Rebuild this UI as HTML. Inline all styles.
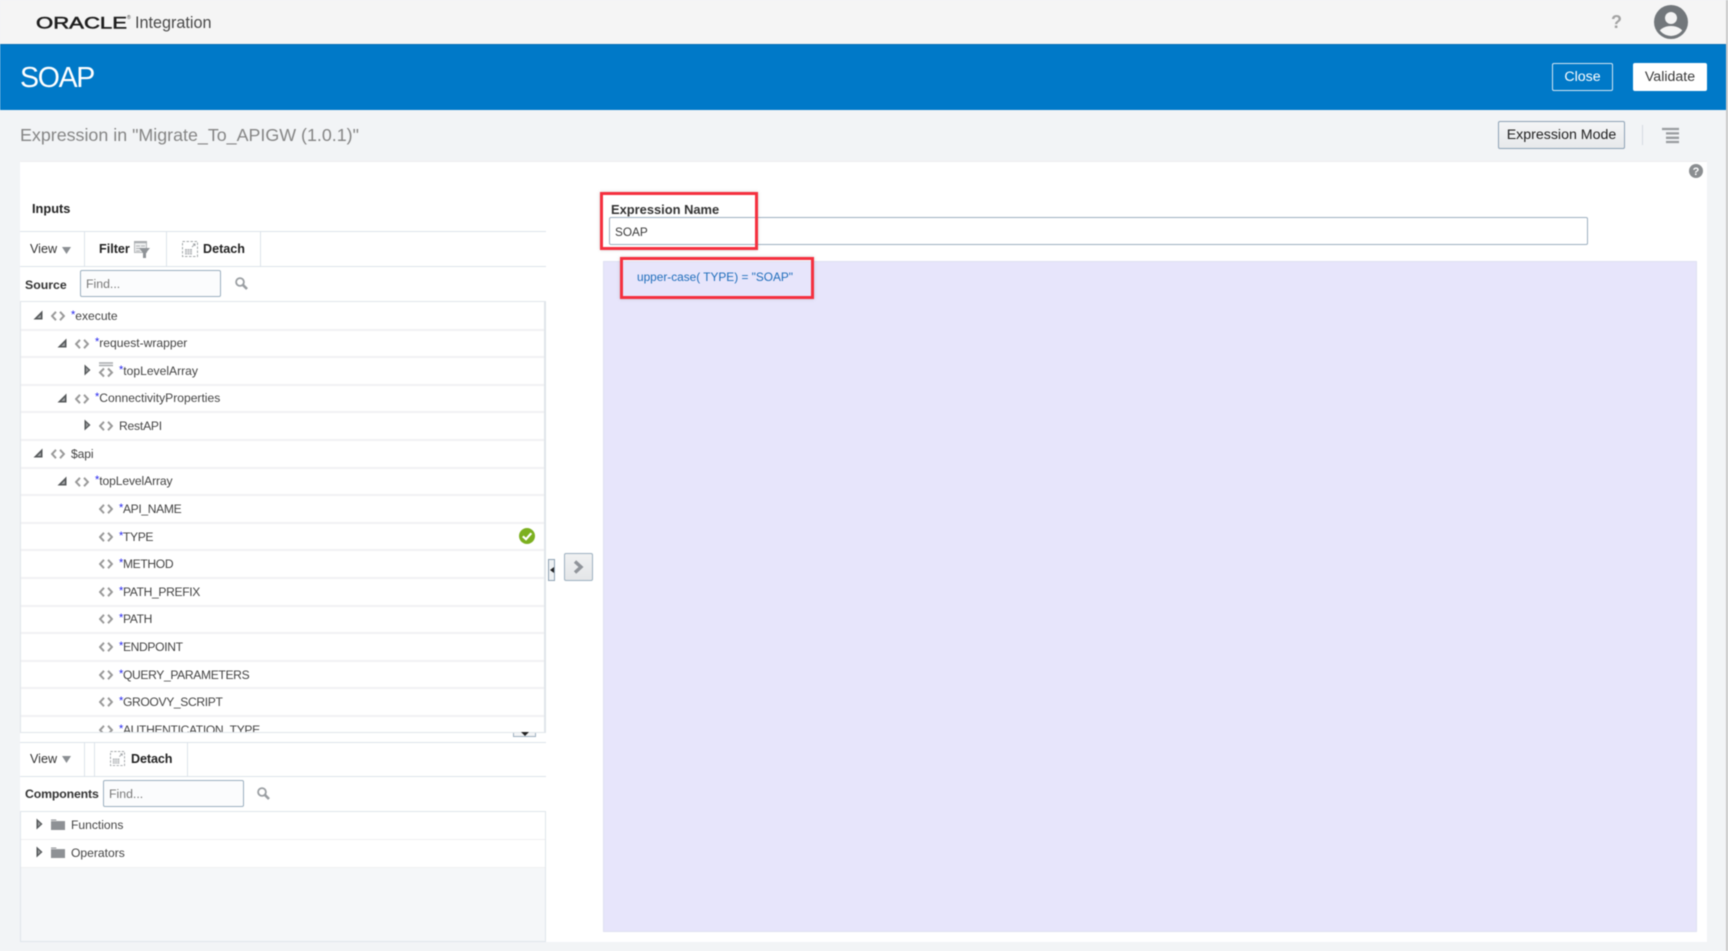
<!DOCTYPE html>
<html><head><meta charset="utf-8"><title>SOAP</title>
<style>
html,body{margin:0;padding:0;width:1728px;height:951px;overflow:hidden;background:#f2f4f6}
body{font-family:"Liberation Sans",Arial,sans-serif;color:#3f3f3f;position:relative}
#r{position:absolute;left:0;top:0;width:1728px;height:951px;filter:blur(.4px)}
.a,.t,.l,.b{position:absolute}
.t{white-space:nowrap;font-size:12.1px;line-height:16px;color:#444}
.t i{font-style:normal;color:#1a1aee;font-size:11px;position:relative;top:-2px}
.u{letter-spacing:-.35px}
.b{font-weight:bold;color:#222;font-size:12.6px;line-height:16px;white-space:nowrap}
.l{background:#dde4eb}
.rl{position:absolute;left:0;width:524px;height:2px;background:#f1f2f3}
.inp{position:absolute;box-sizing:border-box;border:1px solid #9db0c0;border-radius:2px;background:#fbfcfd;font-size:12.3px;color:#777;padding:0 0 0 5px;line-height:27px}
.btn{position:absolute;box-sizing:border-box;text-align:center;border-radius:2px;font-size:14.2px}
svg{position:absolute;overflow:visible}
.red{position:absolute;box-sizing:border-box;border:3px solid #f5303f;box-shadow:0 0 3px rgba(120,120,120,.35)}
</style></head><body>
<div id="r">
<svg width="0" height="0" style="position:absolute">
<defs>
<symbol id="c" viewBox="0 0 14 10"><path d="M5 .8 1 5l4 4.2M9 .8 13 5 9 9.200" fill="none" stroke="#9a9a9a" stroke-width="2"/></symbol>
<symbol id="ex" viewBox="0 0 10 10"><path d="M9.500.5V9.500H.5Z" fill="#55585a"/><path d="M7.800 4.500V8H4.300Z" fill="#a8aaac"/></symbol>
<symbol id="co" viewBox="0 0 7 12"><path d="M.5.500 6.500 6 .5 11.500Z" fill="#55585a"/><path d="M2 3.500 4.700 6 2 8.500Z" fill="#9a9c9e"/></symbol>
<symbol id="s" viewBox="0 0 13 13"><circle cx="5" cy="5" r="3.900" fill="none" stroke="#9a9ea2" stroke-width="1.800"/><path d="M7.800 7.800 12 12" stroke="#9a9ea2" stroke-width="2.600"/></symbol>
<symbol id="d" viewBox="0 0 16 16"><rect x=".5" y=".5" width="15" height="15" fill="none" stroke="#a3a7aa" stroke-dasharray="2.500 1.500"/><path d="M3 8h7v5.500H3z" fill="#b3b6b9"/><path d="M3 10h7M3 11.800h7M5.300 8v5.500M7.600 8v5.500" stroke="#fff" stroke-width=".5"/><path d="M10 6l3-3M11 3h2v2" fill="none" stroke="#a3a7aa"/></symbol>
<symbol id="f" viewBox="0 0 14 12"><path d="M0 1.500h5L6 3h8v9H0Z" fill="#8e9195"/><path d="M0 2.800h14" stroke="#fff" stroke-width=".6"/></symbol>
</defs></svg>

<!-- top bar -->
<div class="a" style="left:0;top:0;width:1728px;height:44px;background:#f5f5f5"></div>
<svg style="left:36px;top:14px" width="96" height="18"><text x="0" y="14.300" font-family="'Liberation Sans',sans-serif" font-size="17" font-weight="normal" fill="#1e1e1e" stroke="#1e1e1e" stroke-width=".55" textLength="91" lengthAdjust="spacingAndGlyphs">ORACLE</text></svg>
<div class="t" style="left:127px;top:15px;font-size:5px;line-height:6px;color:#333">®</div>
<div class="t" style="left:135px;top:13px;font-size:16.200px;line-height:20px;color:#4a4a4a">Integration</div>
<div class="t" style="left:1611px;top:11px;font-size:18px;line-height:22px;font-weight:bold;color:#a3a3a3">?</div>
<svg style="left:1653px;top:4px" width="36" height="36" viewBox="0 0 36 36"><defs><clipPath id="av"><circle cx="18" cy="18" r="14"/></clipPath></defs><circle cx="18" cy="18" r="17" fill="#72777b"/><g clip-path="url(#av)"><ellipse cx="18" cy="31" rx="13" ry="9" fill="#f4f4f4"/></g><circle cx="18" cy="14" r="6" fill="#f4f4f4"/></svg>

<!-- blue bar -->
<div class="a" style="left:0;top:44px;width:1728px;height:66px;background:#0079c8;border-top:1px solid #066fb5;box-sizing:border-box"></div>
<div class="t" style="left:20px;top:59px;font-size:28.500px;line-height:38px;color:#fff;letter-spacing:-1.300px">SOAP</div>
<div class="btn" style="left:1552px;top:63px;width:61px;height:28px;border:1px solid #d5e6f3;color:#fff;line-height:27px">Close</div>
<div class="btn" style="left:1633px;top:63px;width:74px;height:28px;background:#fff;color:#3a3a3a;line-height:29px">Validate</div>

<!-- sub header -->
<div class="t" style="left:20px;top:123px;font-size:17.850px;line-height:24px;color:#858585">Expression in "Migrate_To_APIGW (1.0.1)"</div>
<div class="btn" style="left:1498px;top:121px;width:127px;height:28px;border:1px solid #8da2b5;background:linear-gradient(#f4f5f6,#e7e9eb);color:#222;line-height:27px">Expression Mode</div>
<div class="a" style="left:1642px;top:125px;width:1px;height:20px;background:#d5dce2"></div>
<svg style="left:1662px;top:128px" width="18" height="16"><path d="M0 1h17M4 5.400h13M4 9.800h13M4 14h13" stroke="#999c9f" stroke-width="2.300"/></svg>

<!-- white panel -->
<div class="a" style="left:20px;top:161px;width:1687px;height:781px;background:#fff;border-top:1px solid #edeeef;box-sizing:border-box"></div>
<svg style="left:1689px;top:164px" width="14" height="14" viewBox="0 0 14 14"><circle cx="7" cy="7" r="7" fill="#8b8e91"/><text x="7" y="11" text-anchor="middle" font-family="'Liberation Sans',sans-serif" font-weight="bold" font-size="11" fill="#fff">?</text></svg>

<div class="b" style="left:32px;top:201px;font-size:12.800px">Inputs</div>

<!-- toolbar 1 -->
<div class="l" style="left:20px;top:231px;width:526px;height:1px"></div>
<div class="l" style="left:20px;top:266px;width:526px;height:1px"></div>
<div class="l" style="left:84px;top:231px;width:1px;height:35px"></div>
<div class="l" style="left:166px;top:231px;width:1px;height:35px"></div>
<div class="l" style="left:260px;top:231px;width:1px;height:35px"></div>
<div class="t" style="left:30px;top:241px;font-size:12.600px;color:#333">View</div>
<svg style="left:62px;top:247px" width="9" height="7"><path d="M0 0h9L4.500 7Z" fill="#8b8f93"/></svg>
<div class="b" style="left:99px;top:241px">Filter</div>
<svg style="left:134px;top:241px" width="16" height="17" viewBox="0 0 16 17"><path d="M.5.500h12v11h-12z" fill="#eeeff0" stroke="#b4b7ba"/><path d="M0 1.200h13" stroke="#a8abae" stroke-width="2"/><path d="M2 5h4M2 7.500h4M2 10h4M7 5h4" stroke="#b0b3b6"/><path d="M5 7h11l-4 5v5h-3v-5Z" fill="#8f9397"/></svg>
<svg style="left:182px;top:241px" width="16" height="16"><use href="#d"/></svg>
<div class="b" style="left:203px;top:241px">Detach</div>
<div class="b" style="left:25px;top:276.500px;color:#333;font-size:12.300px">Source</div>
<div class="inp" style="left:80px;top:270px;width:141px;height:27px">Find...</div>
<svg style="left:235px;top:277px" width="13" height="13"><use href="#s"/></svg>

<!-- tree 1 -->
<div class="a" style="left:20px;top:301px;width:526px;height:432px;box-sizing:border-box;border:1px solid #e0e5ea;border-right-width:2px;overflow:hidden;background:#fff">
<div class="rl" style="top:26.600px"></div><div class="rl" style="top:54.200px"></div><div class="rl" style="top:81.800px"></div><div class="rl" style="top:109.400px"></div><div class="rl" style="top:137px"></div><div class="rl" style="top:164.600px"></div><div class="rl" style="top:192.200px"></div><div class="rl" style="top:219.800px"></div><div class="rl" style="top:247.400px"></div><div class="rl" style="top:275px"></div><div class="rl" style="top:302.600px"></div><div class="rl" style="top:330.200px"></div><div class="rl" style="top:357.800px"></div><div class="rl" style="top:385.400px"></div><div class="rl" style="top:413px"></div>

<svg style="left:12px;top:8px" width="10" height="10"><use href="#ex"/></svg><svg style="left:30px;top:9px" width="14" height="10"><use href="#c"/></svg><div class="t" style="left:50px;top:5.500px"><i>*</i>execute</div>
<svg style="left:36px;top:36px" width="10" height="10"><use href="#ex"/></svg><svg style="left:54px;top:37px" width="14" height="10"><use href="#c"/></svg><div class="t" style="left:74px;top:33px"><i>*</i>request-wrapper</div>
<svg style="left:63px;top:62px" width="7" height="12"><use href="#co"/></svg><svg style="left:78px;top:60px" width="14" height="16" viewBox="0 0 14 16"><path d="M0 1h14M0 3.500h14" stroke="#a8abae" stroke-width="1.400"/><path d="M5 6.500 1 10.500l4 4M9 6.500l4 4-4 4" fill="none" stroke="#9a9a9a" stroke-width="2"/></svg><div class="t" style="left:98px;top:60.500px"><i>*</i>topLevelArray</div>
<svg style="left:36px;top:91px" width="10" height="10"><use href="#ex"/></svg><svg style="left:54px;top:92px" width="14" height="10"><use href="#c"/></svg><div class="t" style="left:74px;top:88px"><i>*</i>ConnectivityProperties</div>
<svg style="left:63px;top:117px" width="7" height="12"><use href="#co"/></svg><svg style="left:78px;top:119px" width="14" height="10"><use href="#c"/></svg><div class="t" style="left:98px;top:115.500px;letter-spacing:-.2px">RestAPI</div>
<svg style="left:12px;top:146px" width="10" height="10"><use href="#ex"/></svg><svg style="left:30px;top:147px" width="14" height="10"><use href="#c"/></svg><div class="t" style="left:50px;top:143.500px;letter-spacing:-.1px">$api</div>
<svg style="left:36px;top:174px" width="10" height="10"><use href="#ex"/></svg><svg style="left:54px;top:175px" width="14" height="10"><use href="#c"/></svg><div class="t" style="left:74px;top:171px;letter-spacing:-.1px"><i>*</i>topLevelArray</div>
<svg style="left:78px;top:202px" width="14" height="10"><use href="#c"/></svg><div class="t u" style="left:98px;top:199px"><i>*</i>API_NAME</div>
<svg style="left:78px;top:230px" width="14" height="10"><use href="#c"/></svg><div class="t u" style="left:98px;top:226.500px"><i>*</i>TYPE</div>
<svg style="left:78px;top:257px" width="14" height="10"><use href="#c"/></svg><div class="t u" style="left:98px;top:254px"><i>*</i>METHOD</div>
<svg style="left:78px;top:285px" width="14" height="10"><use href="#c"/></svg><div class="t u" style="left:98px;top:281.500px"><i>*</i>PATH_PREFIX</div>
<svg style="left:78px;top:312px" width="14" height="10"><use href="#c"/></svg><div class="t u" style="left:98px;top:309px"><i>*</i>PATH</div>
<svg style="left:78px;top:340px" width="14" height="10"><use href="#c"/></svg><div class="t u" style="left:98px;top:336.500px"><i>*</i>ENDPOINT</div>
<svg style="left:78px;top:368px" width="14" height="10"><use href="#c"/></svg><div class="t u" style="left:98px;top:364.500px"><i>*</i>QUERY_PARAMETERS</div>
<svg style="left:78px;top:395px" width="14" height="10"><use href="#c"/></svg><div class="t u" style="left:98px;top:392px"><i>*</i>GROOVY_SCRIPT</div>
<svg style="left:78px;top:423px" width="14" height="10"><use href="#c"/></svg><div class="t u" style="left:98px;top:419.500px"><i>*</i>AUTHENTICATION_TYPE</div>
</div>
<svg style="left:519px;top:528px" width="16" height="16" viewBox="0 0 16 16"><circle cx="8" cy="8" r="8" fill="#7cb01f"/><path d="M3.800 8.300 7 11.200 12.300 5.200" fill="none" stroke="#fff" stroke-width="2.200"/></svg>
<div class="a" style="left:513px;top:733px;width:23px;height:4px;background:#f4f5f6;border:1px solid #9db0c0;border-top:0;box-sizing:border-box"></div>
<svg style="left:521px;top:732px" width="8" height="4"><path d="M0 0h8L4 4Z" fill="#222"/></svg>

<!-- splitter -->
<div class="a" style="left:548px;top:559px;width:7px;height:22px;box-sizing:border-box;border:1px solid #8ea2b4;background:#eef1f3"></div>
<svg style="left:550px;top:567px" width="4" height="6"><path d="M4 0V6L0 3Z" fill="#222"/></svg>
<div class="a" style="left:564px;top:553px;width:29px;height:28px;box-sizing:border-box;border:1px solid #9db0c0;border-radius:2px;background:linear-gradient(#f0f1f2,#e4e6e8)"></div>
<svg style="left:573px;top:560px" width="11" height="14"><path d="M2 1.500 8 7 2 12.500" fill="none" stroke="#90949a" stroke-width="3.400"/></svg>

<!-- toolbar 2 -->
<div class="l" style="left:20px;top:742px;width:526px;height:1px"></div>
<div class="l" style="left:20px;top:776px;width:526px;height:1px"></div>
<div class="l" style="left:84px;top:742px;width:1px;height:34px"></div>
<div class="l" style="left:94px;top:742px;width:1px;height:34px"></div>
<div class="l" style="left:187px;top:742px;width:1px;height:34px"></div>
<div class="t" style="left:30px;top:751px;font-size:12.600px;color:#333">View</div>
<svg style="left:62px;top:756px" width="9" height="7"><path d="M0 0h9L4.500 7Z" fill="#8b8f93"/></svg>
<svg style="left:110px;top:751px" width="15" height="15"><use href="#d"/></svg>
<div class="b" style="left:131px;top:751px;letter-spacing:-.1px">Detach</div>
<div class="b" style="left:25px;top:786px;color:#333;font-size:12.300px;letter-spacing:-.15px">Components</div>
<div class="inp" style="left:103px;top:780px;width:141px;height:27px">Find...</div>
<svg style="left:257px;top:787px" width="13" height="13"><use href="#s"/></svg>

<!-- tree 2 -->
<div class="a" style="left:20px;top:811px;width:526px;height:131px;box-sizing:border-box;border:1px solid #dfe5eb;background:#f5f7f9;overflow:hidden">
<div class="a" style="left:0;top:0;width:524px;height:27px;background:#fff;border-bottom:1px solid #eff0f1"></div>
<div class="a" style="left:0;top:28px;width:524px;height:27px;background:#fff;border-bottom:1px solid #eff0f1"></div>
<svg style="left:15px;top:6px" width="7" height="12"><use href="#co"/></svg><svg style="left:30px;top:6px" width="14" height="12"><use href="#f"/></svg><div class="t" style="left:50px;top:5px">Functions</div>
<svg style="left:15px;top:34px" width="7" height="12"><use href="#co"/></svg><svg style="left:30px;top:34px" width="14" height="12"><use href="#f"/></svg><div class="t" style="left:50px;top:33px">Operators</div>
</div>

<!-- right side -->
<div class="a" style="left:603px;top:261px;width:1094px;height:671px;background:#e7e5fb;box-sizing:border-box;border:1px solid #dfe1f2"></div>
<div class="b" style="left:611px;top:201.500px;font-size:12.900px;color:#333">Expression Name</div>
<div class="inp" style="left:609px;top:217px;width:979px;height:28px;color:#3a3a3a;font-size:11.800px;line-height:28px;background:#fff">SOAP</div>
<div class="t" style="left:637px;top:269px;font-size:11.850px;color:#1e6dbb">upper-case( TYPE) = "SOAP"</div>
<div class="red" style="left:600px;top:192px;width:158px;height:58px"></div>
<div class="red" style="left:620px;top:257px;width:194px;height:42px"></div>

<div class="a" style="left:1726px;top:0;width:2px;height:951px;background:#c9c9c9"></div>
</div>
</body></html>
